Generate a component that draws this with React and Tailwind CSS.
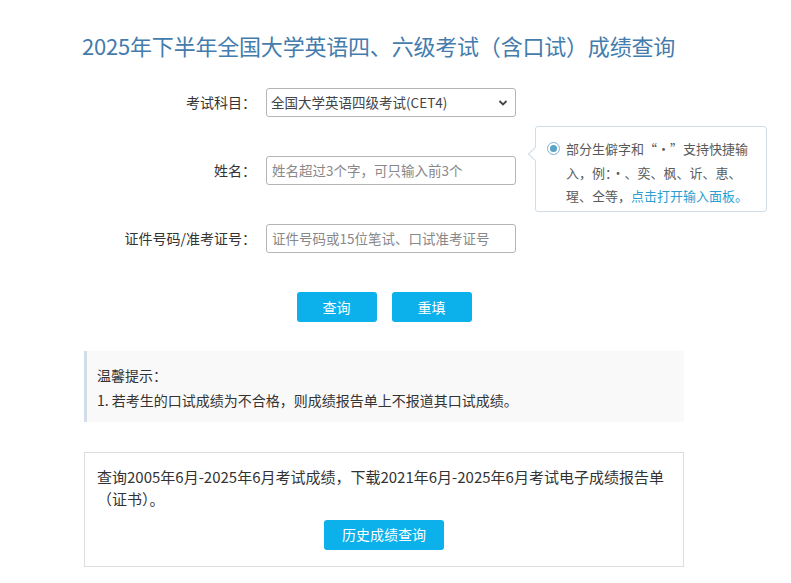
import React from "react";

const Label = ({ children }) => (
  <div className="w-[172px] text-right text-[14px] text-[#333]">{children}</div>
);

export default function App() {
  return (
    <div className="min-h-[583px] bg-white font-['Noto_Sans_CJK_SC',sans-serif]">
      <div className="ml-[84px] w-[600px] pt-[29px]">
        <h1 className="text-[22px] leading-[32px] text-[#437cad] -ml-[2px] tracking-[-0.2px]">
          2025年下半年全国大学英语四、六级考试（含口试）成绩查询
        </h1>

        <div className="mt-[27px] flex flex-col gap-[39px]">
          <div className="flex items-center h-[29px]">
            <Label>考试科目：</Label>
            <div className="ml-[10px] relative w-[250px] h-[29px] border border-[#b5b5b5] rounded-[3px] flex items-center px-[4px] text-[13.5px] text-[#444]">
              全国大学英语四级考试(CET4)
              <svg className="absolute right-[7px] top-[10px]" width="10" height="8" viewBox="0 0 10 8">
                <path d="M1.5 2 L5 5.5 L8.5 2" fill="none" stroke="#444" strokeWidth="1.8" />
              </svg>
            </div>
          </div>

          <div className="flex items-center h-[29px] relative">
            <Label>姓名：</Label>
            <div className="ml-[10px] w-[250px] h-[29px] border border-[#b5b5b5] rounded-[3px] flex items-center px-[5px] text-[13.5px] text-[#888]">
              姓名超过3个字，可只输入前3个
            </div>
            <div className="absolute left-[451px] top-[-30px] w-[232px] h-[86px] border border-[#cfdde8] rounded-[3px] bg-white">
              <div className="absolute left-[-6px] top-[22px] w-[10px] h-[10px] bg-white border-l border-b border-[#cfdde8] rotate-45"></div>
              <div className="relative pl-[11px] pt-[10px] flex">
                <div className="mt-[5px] w-[13px] h-[13px] rounded-full border border-[#7fb3d0] flex items-center justify-center shrink-0">
                  <div className="w-[7px] h-[7px] rounded-full bg-[#5aa2c8]"></div>
                </div>
                <div className="ml-[6px] text-[13px] leading-[23.5px] text-[#5a5a5a] w-[200px]">
                  部分生僻字和“·”支持快捷输入，例：·、奕、枫、䜣、恵、瑆、仝等，
                  <span className="text-[#2a9fd0]">点击打开输入面板。</span>
                </div>
              </div>
            </div>
          </div>

          <div className="flex items-center h-[29px]">
            <Label>证件号码/准考证号：</Label>
            <div className="ml-[10px] w-[250px] h-[29px] border border-[#b5b5b5] rounded-[3px] flex items-center px-[5px] text-[13.5px] text-[#888]">
              证件号码或15位笔试、口试准考证号
            </div>
          </div>
        </div>

        <div className="mt-[39px] flex justify-center gap-[15px]">
          <button className="w-[80px] h-[30px] rounded-[3px] bg-[#0cb0ea] text-white text-[14px]">查询</button>
          <button className="w-[80px] h-[30px] rounded-[3px] bg-[#0cb0ea] text-white text-[14px]">重填</button>
        </div>

        <div className="mt-[29px] h-[71px] bg-[#f9f9f9] border-l-[3px] border-[#d3dde8] pl-[10px] pt-[12px] text-[14px] leading-[25px] text-[#333]">
          <div>温馨提示：</div>
          <div>1. 若考生的口试成绩为不合格，则成绩报告单上不报道其口试成绩。</div>
        </div>

        <div className="mt-[30px] h-[115px] border border-[#dddddd] px-[12px] pt-[13px] text-[15px] leading-[21.5px] text-[#333]">
          <div>查询2005年6月-2025年6月考试成绩，下载2021年6月-2025年6月考试电子成绩报告单（证书）。</div>
          <div className="mt-[11px] flex justify-center">
            <button className="w-[120px] h-[30px] rounded-[3px] bg-[#0cb0ea] text-white text-[14px]">历史成绩查询</button>
          </div>
        </div>
      </div>
    </div>
  );
}
